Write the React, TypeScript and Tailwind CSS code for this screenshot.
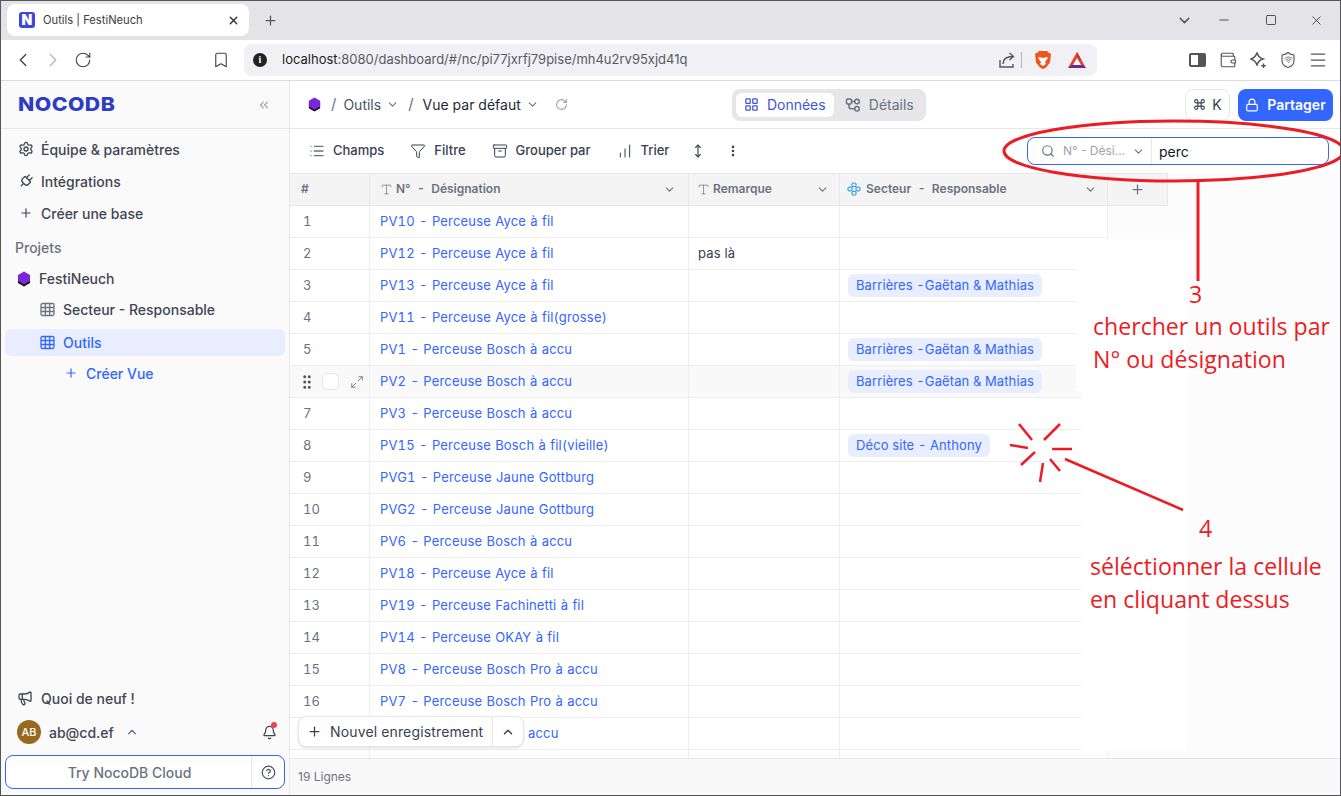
import {
  Archive,
  Bell,
  Bookmark,
  ChartNoAxesColumnIncreasing,
  ChevronDown,
  ChevronLeft,
  ChevronRight,
  ChevronUp,
  ChevronsLeft,
  CircleHelp,
  Command,
  EllipsisVertical,
  Filter,
  GripVertical,
  LayoutGrid,
  List,
  Lock,
  Maximize2,
  Megaphone,
  Menu,
  Minus,
  MoveVertical,
  Plug,
  Plus,
  RotateCw,
  Search,
  Settings,
  Shield,
  Square,
  Type,
  Wallet,
  Wifi,
  X,
} from "lucide-react"

interface Row {
  num: string
  label: string
  remark?: string
  chip?: string
}

const barrieres = "Barrières -Gaëtan & Mathias"

const rows: Row[] = [
  { num: "1", label: "PV10 - Perceuse Ayce à fil" },
  { num: "2", label: "PV12 - Perceuse Ayce à fil", remark: "pas là" },
  { num: "3", label: "PV13 - Perceuse Ayce à fil", chip: barrieres },
  { num: "4", label: "PV11 - Perceuse Ayce à fil(grosse)" },
  { num: "5", label: "PV1 - Perceuse Bosch à accu", chip: barrieres },
  { num: "6", label: "PV2 - Perceuse Bosch à accu", chip: barrieres },
  { num: "7", label: "PV3 - Perceuse Bosch à accu" },
  { num: "8", label: "PV15 - Perceuse Bosch à fil(vieille)", chip: "Déco site - Anthony" },
  { num: "9", label: "PVG1 - Perceuse Jaune Gottburg" },
  { num: "10", label: "PVG2 - Perceuse Jaune Gottburg" },
  { num: "11", label: "PV6 - Perceuse Bosch à accu" },
  { num: "12", label: "PV18 - Perceuse Ayce à fil" },
  { num: "13", label: "PV19 - Perceuse Fachinetti à fil" },
  { num: "14", label: "PV14 - Perceuse OKAY à fil" },
  { num: "15", label: "PV8 - Perceuse Bosch Pro à accu" },
  { num: "16", label: "PV7 - Perceuse Bosch Pro à accu" },
]

function Hexagon({ size = 16 }: { size?: number }) {
  return (
    <svg width={size} height={size} viewBox="0 0 16 16">
      <path d="M8 2.5 14 6v6l-6 3.500L2 12V6z" fill="#0b0b12" />
      <path d="M8 .5 14 4v6l-6 3.500L2 10V4z" fill="#7b26d9" />
    </svg>
  )
}

function TableIcon({ color }: { color: string }) {
  return (
    <svg width="15" height="15" viewBox="0 0 15 15" fill="none" stroke={color} strokeWidth="1.300">
      <rect x="1" y="1.500" width="13" height="12" rx="1.500" />
      <path d="M1 5.500h13M1 9.500h13M5.300 1.500v12M9.700 1.500v12" />
    </svg>
  )
}

function LinkIcon() {
  return (
    <svg width="14" height="14" viewBox="0 0 14 14" fill="none" stroke="#36a3e0" strokeWidth="1.200">
      <rect x="5" y="1" width="4" height="3.600" rx="1.200" />
      <rect x="5" y="9.400" width="4" height="3.600" rx="1.200" />
      <rect x="1" y="5.200" width="4" height="3.600" rx="1.200" />
      <rect x="9" y="5.200" width="4" height="3.600" rx="1.200" />
    </svg>
  )
}

function DetailsIcon() {
  return (
    <svg width="16" height="16" viewBox="0 0 16 16" fill="none" stroke="#6b7280" strokeWidth="1.500">
      <rect x="1.500" y="2" width="5" height="5" rx="1.200" />
      <circle cx="12" cy="4.500" r="2.300" />
      <circle cx="12" cy="11.800" r="2.300" />
      <path d="M6.500 4.500h3M4 7v2.500c0 1.400.8 2.300 2.200 2.300h3.500" />
    </svg>
  )
}

function ShareIcon() {
  return (
    <svg width="18" height="18" viewBox="0 0 18 18" fill="none" stroke="#555" strokeWidth="1.400">
      <path d="M2 9v7h13v-3" />
      <path d="M5 13c0-5 3.500-7.500 10-7.500M11.500 2l4 3.500-4 3.500" />
    </svg>
  )
}

function StarPlusIcon() {
  return (
    <svg width="18" height="18" viewBox="0 0 18 18" fill="none" stroke="#555" strokeWidth="1.400">
      <path d="M8 1.500c.8 3.500 2.500 5.500 6 6.500-3.500 1-5.200 3-6 6.500C7.200 11 5.500 9 1.500 8 5.500 7 7.200 5 8 1.500z" />
      <path d="M14.500 12.500v4.500M12.200 14.800h4.600" />
    </svg>
  )
}

function BraveIcon() {
  return (
    <svg width="18" height="20" viewBox="0 0 18 20">
      <path d="M5 1h8l2 2 2 .5-1 9-4 5-3 1.500-3-1.500-4-5-1-9L3 3z" fill="#f1541c" />
      <path d="M5 7l4 1 4-1 1 1-3 4 1 2-3 2-3-2 1-2-3-4z" fill="#fff" />
    </svg>
  )
}

function BatIcon() {
  return (
    <svg width="20" height="18" viewBox="0 0 20 18">
      <path d="M10 1 19 17H1z" fill="#e8402f" />
      <path d="M10 1 14.500 9 10 6z" fill="#c9283e" />
      <path d="M1 17l3.500-3h11l3.500 3z" fill="#6b2a8f" />
      <path d="M10 7l4 7H6z" fill="#fff" />
    </svg>
  )
}

function Annotations() {
  return (
    <>
      {/* white patches the author pasted under the notes */}
      <div className="absolute left-[1075px] top-[238px] w-[111px] h-[152px] bg-white" />
      <div className="absolute left-[1080px] top-[390px] w-[106px] h-[360px] bg-white" />
      <svg className="absolute inset-0 w-[1341px] h-[796px] pointer-events-none" viewBox="0 0 1341 796" fill="none" stroke="#ed1c24">
        <ellipse cx="1173" cy="150" rx="170" ry="30" strokeWidth="3" />
        <path d="M1197 180v100" strokeWidth="3" />
        <g strokeWidth="2.500">
          <path d="M1018 423l13 16M1059 423l-16 16M1009 444l18 3M1034 451l-14 13M1051 448h20M1042 462l-3 19M1049 458l10 12M1064 458l118 51" />
        </g>
      </svg>
      <div className="absolute left-[1092px] top-[277px] w-[240px] text-[#ed1c24] text-[23.100px] leading-[33px] font-['Open_Sans',sans-serif] whitespace-nowrap">
        <div className="pl-[96px]">3</div>
        <div className="mt-[-1px]">chercher un outils par</div>
        <div>N° ou désignation</div>
      </div>
      <div className="absolute left-[1089px] top-[511px] w-[240px] text-[#ed1c24] text-[23.100px] leading-[33px] font-['Open_Sans',sans-serif] whitespace-nowrap">
        <div className="pl-[109px]">4</div>
        <div className="mt-[5px]">séléctionner la cellule</div>
        <div>en cliquant dessus</div>
      </div>
    </>
  )
}

function BrowserChrome() {
  return (
    <>
      <div className="h-[39px] bg-[#e3e3e8] flex items-start pl-[6px] shrink-0">
        <div className="mt-[3px] w-[242px] h-[32px] bg-white rounded-lg flex items-center pl-[12px] pr-[9px]">
          <div className="w-4 h-4 rounded-[3px] bg-[#3d46d8] text-white text-[14px] font-black leading-4 text-center">N</div>
          <span className="ml-[8px] text-[11.200px] text-[#3c3c43] flex-1">Outils | FestiNeuch</span>
          <X size={13} strokeWidth={2.500} className="text-[#333]" />
        </div>
        <Plus size={15} strokeWidth={2} className="ml-[14px] mt-[12px] text-[#55555a]" />
        <div className="flex-1" />
        <ChevronDown size={17} className="mt-[11px] mr-[24px] text-[#55555a]" />
        <Minus size={14} strokeWidth={1.300} className="mt-[12px] mr-[34px] text-[#222]" />
        <Square size={12} strokeWidth={1.500} className="mt-[13px] mr-[32px] text-[#222]" />
        <X size={15} strokeWidth={1.200} className="mt-[12px] mr-[16px] text-[#222]" />
      </div>
      <div className="h-[41px] bg-white border-b border-[#dcdce0] flex items-center pl-[11px] shrink-0">
        <ChevronLeft size={22} strokeWidth={1.500} className="text-[#444]" />
        <ChevronRight size={22} strokeWidth={1.500} className="ml-[8px] text-[#b8b8bc]" />
        <RotateCw size={18} strokeWidth={1.500} className="ml-[10px] text-[#444]" />
        <Bookmark size={18} strokeWidth={1.500} className="ml-[120px] text-[#444]" />
        <div className="ml-[14px] w-[853px] h-[32px] bg-[#f1f1f5] rounded-lg flex items-center pl-[9px] pr-[10px]">
          <div className="w-[14px] h-[14px] rounded-full bg-[#222] text-white text-[10px] leading-[14px] text-center font-bold font-['Liberation_Serif',serif]">i</div>
          <span className="ml-[15px] text-[13px] text-[#5a5a60] flex-1 whitespace-nowrap"><span className="text-[#1d1d20]">localhost</span>:8080/dashboard/#/nc/pi77jxrfj79pise/mh4u2rv95xjd41q</span>
          <ShareIcon />
          <div className="ml-[5px] w-px h-4 bg-[#b4b4b8]" />
          <div className="ml-[12px]"><BraveIcon /></div>
          <div className="ml-[15px]"><BatIcon /></div>
        </div>
        <div className="ml-[92px] w-[17px] h-[14px] rounded-[2px] border-2 border-[#555] flex justify-end">
          <div className="w-[6px] bg-[#555]" />
        </div>
        <Wallet size={18} strokeWidth={1.500} className="ml-[13px] text-[#555]" />
        <div className="ml-[12px]"><StarPlusIcon /></div>
        <div className="ml-[12px] relative">
          <Shield size={18} strokeWidth={1.500} className="text-[#555]" />
          <Wifi size={9} strokeWidth={2} className="absolute left-[4.500px] top-[4px] text-[#555]" />
        </div>
        <Menu size={20} strokeWidth={1.500} className="ml-[11px] text-[#555]" />
      </div>
    </>
  )
}

function Sidebar() {
  return (
    <aside className="w-[289px] shrink-0 bg-[#fafafa] border-r border-[#e7e7e9] flex flex-col text-[14px] font-medium text-[#3f4654]">
      <div className="h-[48px] border-b border-[#e7e7e9] flex items-center pl-[17px] pr-[18px] shrink-0">
        <span className="text-[19px] font-extrabold text-[#2f3cc4] tracking-[0.4px] flex-1 leading-none origin-left scale-x-[1.12]">NOCODB</span>
        <ChevronsLeft size={14} className="text-[#9aa2af]" />
      </div>
      <div className="pt-[4px] pl-[4px] pr-[4px] flex flex-col">
        <div className="h-[32px] flex items-center pl-[13px] gap-[7px]"><Settings size={16} />Équipe & paramètres</div>
        <div className="h-[32px] flex items-center pl-[13px] gap-[7px]"><Plug size={16} className="rotate-45" />Intégrations</div>
        <div className="h-[32px] flex items-center pl-[13px] gap-[8px]"><Plus size={14} className="ml-[1px]" />Créer une base</div>
        <div className="h-[34px] mt-[1px] flex items-center pl-[10px] text-[#6b7280]">Projets</div>
        <div className="h-[29px] flex items-center pl-[11px] gap-[7px]"><Hexagon size={16} />FestiNeuch</div>
        <div className="h-[32px] flex items-center pl-[35px] gap-[8px]"><TableIcon color="#6b7280" />Secteur - Responsable</div>
        <div className="h-[27px] mt-[4px] rounded-md bg-[#e8eeff] text-[#3366ff] flex items-center pl-[35px] gap-[8px]"><TableIcon color="#3366ff" />Outils</div>
        <div className="h-[34px] flex items-center pl-[59px] gap-[8px] text-[#3366ff]"><Plus size={14} />Créer Vue</div>
      </div>
      <div className="flex-1" />
      <div className="flex flex-col pl-[4px] pr-[4px] pb-[6px]">
        <div className="h-[32px] flex items-center pl-[12px] gap-[8px]"><Megaphone size={16} />Quoi de neuf !</div>
        <div className="h-[36px] flex items-center pl-[12px] pr-[8px]">
          <div className="w-6 h-6 rounded-full bg-[#96691f] text-white text-[11px] leading-6 text-center">AB</div>
          <span className="ml-[8px]">ab@cd.ef</span>
          <ChevronUp size={14} className="ml-[11px] text-[#6b7280]" />
          <div className="flex-1" />
          <div className="relative">
            <Bell size={15} />
            <div className="absolute right-[0px] top-[-3px] w-[6px] h-[6px] rounded-full bg-[#ef4444]" />
          </div>
        </div>
        <div className="mt-[5px] h-[34px] bg-white border border-[#3366ff] rounded-lg flex items-center text-[#6b7280]">
          <span className="flex-1 text-center pl-[2px]">Try NocoDB Cloud</span>
          <div className="w-[33px] h-full border-l border-[#e7e7e9] flex items-center justify-center text-[#4b5563]"><CircleHelp size={15} /></div>
        </div>
      </div>
    </aside>
  )
}

function Topbar() {
  return (
    <>
      <div className="h-[48px] border-b border-[#e7e7e9] flex items-center pl-[17px] pr-[7px] shrink-0">
        <Hexagon size={15} />
        <span className="ml-[9px] text-[#6b7280] text-[15px]">/</span>
        <span className="ml-[7px] text-[14px] text-[#4b5563]">Outils</span>
        <ChevronDown size={13} className="ml-[5px] text-[#6b7280]" />
        <span className="ml-[9px] text-[#6b7280] text-[15px]">/</span>
        <span className="ml-[9px] text-[14px] text-[#1f2937]">Vue par défaut</span>
        <ChevronDown size={13} className="ml-[5px] text-[#6b7280]" />
        <RotateCw size={13} className="ml-[16px] text-[#9ca3af]" />
        <div className="ml-[164px] h-[32px] w-[194px] bg-[#e7e7e9] rounded-lg p-[4px] flex items-center">
          <div className="h-[24px] w-[98px] bg-white rounded-md flex items-center justify-center gap-[8px] text-[14px] text-[#3d56d8]">
            <LayoutGrid size={15} />Données
          </div>
          <div className="flex items-center ml-[11px] gap-[8px] text-[14px] text-[#6b7280]">
            <DetailsIcon />Détails
          </div>
        </div>
        <div className="flex-1" />
        <div className="h-[32px] w-[45px] border border-[#e7e7e9] rounded-lg flex items-center justify-center gap-[6px] text-[14px] text-[#374151]">
          <Command size={13} />K
        </div>
        <div className="ml-[8px] h-[32px] w-[95px] bg-[#3366ff] rounded-lg flex items-center justify-center gap-[8px] text-[14px] font-semibold text-white">
          <Lock size={14} />Partager
        </div>
      </div>
      <div className="h-[44px] flex items-center pl-[19px] pr-[11px] text-[13px] font-medium text-[#374151] shrink-0">
        <List size={16} className="text-[#6b7280]" />
        <span className="ml-[8px]">Champs</span>
        <Filter size={16} strokeWidth={1.500} className="ml-[26px]" />
        <span className="ml-[8px]">Filtre</span>
        <Archive size={16} strokeWidth={1.500} className="ml-[26px]" />
        <span className="ml-[8px]">Grouper par</span>
        <ChartNoAxesColumnIncreasing size={16} strokeWidth={1.500} className="ml-[26px]" />
        <span className="ml-[8px]">Trier</span>
        <MoveVertical size={14} className="ml-[22px]" />
        <EllipsisVertical size={14} strokeWidth={2.500} className="ml-[21px]" />
        <div className="flex-1" />
        <div className="w-[302px] h-[28px] bg-white border border-[#3366ff] rounded-lg flex items-center font-normal">
          <div className="w-[124px] h-full border-r border-[#e7e7e9] flex items-center pl-[13px] text-[#9ca3af] text-[12px]">
            <Search size={14} className="text-[#6b7280]" />
            <span className="ml-[8px] whitespace-nowrap">N° - Dési...</span>
            <ChevronDown size={13} className="ml-[7px] text-[#6b7280]" />
          </div>
          <span className="ml-[7px] text-[14px] text-[#111827]">perc</span>
        </div>
      </div>
    </>
  )
}

function Grid() {
  return (
    <div className="flex-1 min-h-0 overflow-hidden bg-[#fcfcfc] relative text-[13px] tracking-[0.17px] tabular-nums">
      <div className="flex h-[33px] w-[878px] text-[12px] font-semibold text-[#6b7280] tracking-normal">
        <div className="w-[80px] bg-[#f4f4f5] border-y border-r border-[#e7e7e9] flex items-center pl-[11px] pb-px">#</div>
        <div className="w-[319px] bg-[#f4f4f5] border-y border-r border-[#e7e7e9] flex items-center pl-[10px] pr-[12px] pb-px">
          <Type size={13} strokeWidth={1.300} />
          <span className="ml-[3px] flex-1 whitespace-pre">N°  -  Désignation</span>
          <ChevronDown size={13} />
        </div>
        <div className="w-[151px] bg-[#f4f4f5] border-y border-r border-[#e7e7e9] flex items-center pl-[8px] pr-[10px] pb-px">
          <Type size={13} strokeWidth={1.300} />
          <span className="ml-[3px] flex-1">Remarque</span>
          <ChevronDown size={13} />
        </div>
        <div className="w-[268px] bg-[#f4f4f5] border-y border-r border-[#e7e7e9] flex items-center pl-[7px] pr-[10px] pb-px">
          <LinkIcon />
          <span className="ml-[5px] flex-1 whitespace-pre">Secteur  -  Responsable</span>
          <ChevronDown size={13} />
        </div>
        <div className="w-[60px] bg-[#f4f4f5] border-y border-r border-[#e7e7e9] flex items-center justify-center">
          <Plus size={15} />
        </div>
      </div>
      {rows.map((r) => {
        const hovered = r.num === "6"
        return (
          <div key={r.num} className={`flex h-[32px] w-[818px] ${hovered ? "bg-[#f9f9fa]" : "bg-white"}`}>
            <div className="w-[80px] border-b border-r border-[#eeeeef] flex items-center pl-[13px] text-[#6b7280]">
              {hovered ? (
                <>
                  <GripVertical size={18} className="ml-[-5px] text-[#4b5563]" />
                  <div className="ml-[6px] w-[17px] h-[17px] rounded-[5px] bg-white border border-[#e5e5e7]" />
                  <Maximize2 size={14} strokeWidth={1.500} className="ml-[11px] text-[#6b7280]" />
                </>
              ) : (
                r.num
              )}
            </div>
            <div className="w-[319px] border-b border-r border-[#eeeeef] flex items-center pl-[10px] text-[#3366ff] [word-spacing:0.6px]">{r.label}</div>
            <div className="w-[151px] border-b border-r border-[#eeeeef] flex items-center pl-[9px] text-[#374151]">{r.remark}</div>
            <div className="w-[268px] border-b border-r border-[#eeeeef] flex items-center pl-[8px]">
              {r.chip && (
                <span className="h-[23px] px-[8px] rounded-md bg-[#e8eeff] text-[#3366ff] flex items-center whitespace-pre tracking-[0.1px]">{r.chip}</span>
              )}
            </div>
          </div>
        )
      })}
      {/* row 17 sits behind the add button, only the end of its label shows */}
      <div className="flex h-[32px] w-[818px] bg-white">
        <div className="w-[80px] border-b border-r border-[#eeeeef]" />
        <div className="w-[319px] border-b border-r border-[#eeeeef] flex items-center pl-[158px] text-[#3366ff]">accu</div>
        <div className="w-[151px] border-b border-r border-[#eeeeef]" />
        <div className="w-[268px] border-b border-r border-[#eeeeef]" />
      </div>
      <div className="flex h-[10px] w-[818px] bg-white">
        <div className="w-[80px] border-r border-[#eeeeef]" />
        <div className="w-[319px] border-r border-[#eeeeef]" />
        <div className="w-[151px] border-r border-[#eeeeef]" />
        <div className="w-[268px] border-r border-[#eeeeef]" />
      </div>
      {/* floating add button */}
      <div className="absolute left-[8px] bottom-[11px] h-[31px] w-[226px] bg-white border border-[#e7e7e9] rounded-lg shadow-sm flex items-center text-[14px] text-[#374151] tracking-[0.15px]">
        <Plus size={15} className="ml-[8px]" />
        <span className="ml-[8px] flex-1 whitespace-nowrap pb-px">Nouvel enregistrement</span>
        <div className="w-[31px] h-full border-l border-[#e7e7e9] flex items-center justify-center">
          <ChevronUp size={14} strokeWidth={2.500} />
        </div>
      </div>
    </div>
  )
}

export default function App() {
  return (
    <div className="relative w-[1341px] h-[796px] overflow-hidden flex flex-col border-t border-x border-b border-[#55555a] font-['Inter',sans-serif] bg-white">
      <BrowserChrome />
      <div className="flex-1 min-h-0 flex">
        <Sidebar />
        <main className="flex-1 min-w-0 flex flex-col">
          <Topbar />
          <Grid />
          <div className="h-[37px] bg-[#f9f9fa] border-t border-[#e7e7e9] flex items-center pl-[8px] text-[12px] text-[#6b7280] shrink-0">19 Lignes</div>
        </main>
      </div>
      <Annotations />
    </div>
  )
}
